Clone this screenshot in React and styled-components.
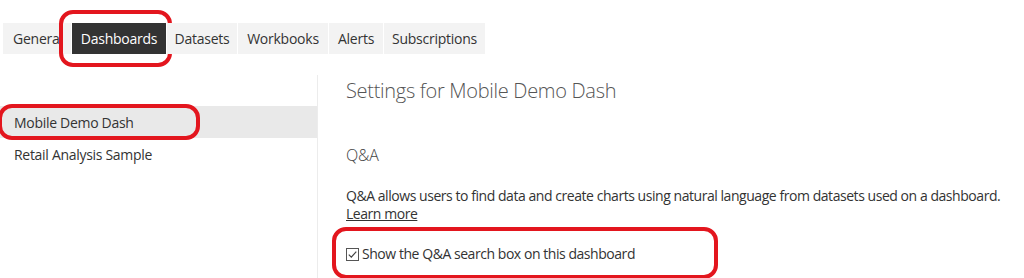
import styled, { createGlobalStyle } from "styled-components";

const GlobalStyle = createGlobalStyle`
  body {
    margin: 0;
    background: #fff;
    font-family: "Open Sans", "Noto Sans", sans-serif;
    color: #333;
  }
`;

const tabs = [
  { label: "Genera", width: 68 },
  { label: "Dashboards", width: 94, active: true },
  { label: "Datasets", width: 70 },
  { label: "Workbooks", width: 90 },
  { label: "Alerts", width: 54 },
  { label: "Subscriptions", width: 101 },
];

const App = () => {
  return (
    <Page>
      <GlobalStyle />
      <TabBar>
        {tabs.map((t) => (
          <Tab key={t.label} $active={t.active} $width={t.width}>
            {t.label}
            {t.active && <Ring $inset="-13px -6px -13px -13px" />}
          </Tab>
        ))}
      </TabBar>
      <Body>
        <Sidebar>
          <NavItem $selected>
            Mobile Demo Dash
            <Ring $inset="-2px auto -2px -2px" $width="202px" />
          </NavItem>
          <NavItem>Retail Analysis Sample</NavItem>
        </Sidebar>
        <Content>
          <Title>Settings for Mobile Demo Dash</Title>
          <Section>Q&amp;A</Section>
          <Description>
            Q&amp;A allows users to find data and create charts using natural
            language from datasets used on a dashboard.
            <br />
            <LearnMore>Learn more</LearnMore>
          </Description>
          <CheckRow>
            <svg width="13" height="13" viewBox="0 0 13 13">
              <rect x="0.5" y="0.5" width="12" height="12" fill="#fff" stroke="#555" />
              <path d="M2.8 6.6 L5.3 9.1 L10.3 3.6" fill="none" stroke="#444" strokeWidth="1.2" />
            </svg>
            Show the Q&amp;A search box on this dashboard
            <Ring $inset="-17px auto -15px -14px" $width="386px" />
          </CheckRow>
        </Content>
      </Body>
    </Page>
  );
};

const Page = styled.div`
  width: 1024px;
  height: 278px;
  overflow: hidden;
`;

const TabBar = styled.div`
  display: flex;
  gap: 1px;
  padding: 23px 0 0 3px;
`;

const Tab = styled.div`
  position: relative;
  box-sizing: border-box;
  width: ${(p) => p.$width}px;
  height: 31px;
  display: flex;
  align-items: center;
  justify-content: center;
  font-size: 14px;
  letter-spacing: -0.25px;
  white-space: nowrap;
  background: ${(p) => (p.$active ? "#333333" : "#f3f3f3")};
  color: ${(p) => (p.$active ? "#fff" : "#333")};

  &:first-child {
    justify-content: flex-start;
    padding-left: 10px;
  }
`;

const Ring = styled.div`
  position: absolute;
  box-sizing: border-box;
  inset: ${(p) => p.$inset};
  width: ${(p) => p.$width || "auto"};
  border: 4px solid #e3161e;
  border-radius: 14px;
  pointer-events: none;
`;

const Body = styled.div`
  display: flex;
  margin-top: 21px;
`;

const Sidebar = styled.div`
  width: 318px;
  height: 203px;
  border-right: 1px solid #ececec;
  padding-top: 31px;
  box-sizing: border-box;
`;

const NavItem = styled.div`
  position: relative;
  height: 32px;
  display: flex;
  align-items: center;
  padding-left: 14px;
  font-size: 14px;
  letter-spacing: -0.3px;
  color: #333;
  background: ${(p) => (p.$selected ? "#e9e9e9" : "transparent")};
`;

const Content = styled.div`
  padding-left: 28px;
  display: flex;
  flex-direction: column;
`;

const Title = styled.div`
  margin-top: 3px;
  font-size: 20px;
  font-weight: 300;
  letter-spacing: -0.3px;
  color: #555;
  line-height: 26px;
`;

const Section = styled.div`
  margin-top: 40px;
  font-size: 16px;
  font-weight: 300;
  letter-spacing: -0.2px;
  color: #444;
  line-height: 22px;
`;

const Description = styled.div`
  margin-top: 21px;
  font-size: 14px;
  letter-spacing: -0.45px;
  line-height: 18px;
  color: #333;
  white-space: nowrap;
`;

const LearnMore = styled.a`
  color: #333;
  text-decoration: underline;
  cursor: pointer;
`;

const CheckRow = styled.label`
  position: relative;
  margin-top: 21px;
  display: flex;
  align-items: center;
  gap: 3px;
  font-size: 14px;
  letter-spacing: -0.45px;
  color: #333;
  line-height: 20px;
`;

export default App;
